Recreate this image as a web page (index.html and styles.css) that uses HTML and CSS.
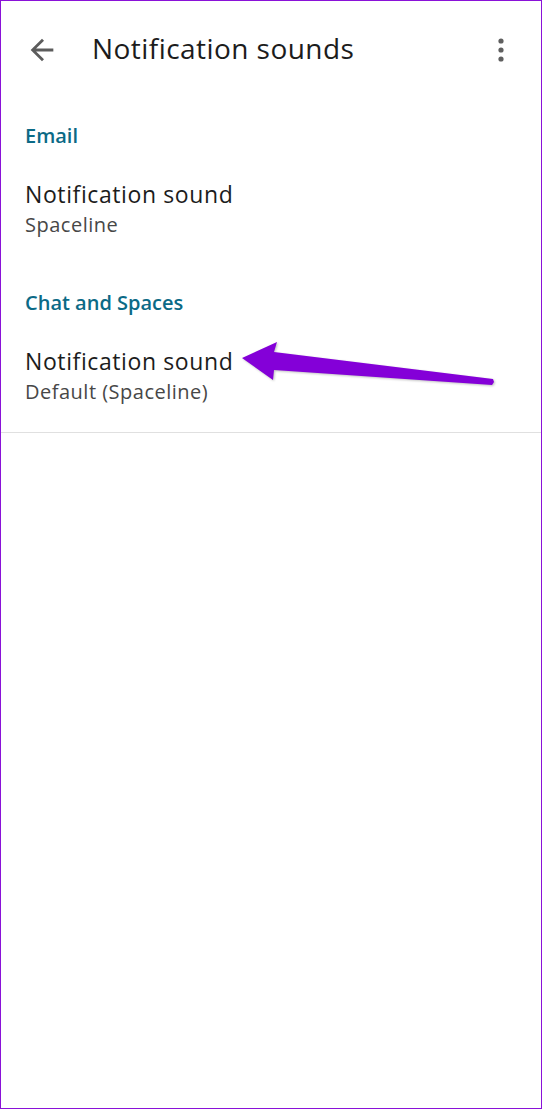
FILE: index.html
```html
<!DOCTYPE html>
<html lang="en">
<head>
  <meta charset="UTF-8">
  <meta name="viewport" content="width=device-width, initial-scale=1.0">
  <title>Notification sounds</title>
  <link rel="stylesheet" href="styles.css">
</head>
<body>
  <div class="screen">
    <!-- Barra superior -->
    <header class="topbar">
      <svg class="back" viewBox="0 0 24 24" width="34" height="34">
        <path d="M20 11H7.83l5.59-5.59L12 4l-8 8 8 8 1.41-1.41L7.83 13H20v-2z"/>
      </svg>
      <h1 class="title">Notification sounds</h1>
      <svg class="more" viewBox="0 0 8 24" width="8" height="24">
        <circle cx="4" cy="3" r="2.6"/>
        <circle cx="4" cy="12" r="2.6"/>
        <circle cx="4" cy="21" r="2.6"/>
      </svg>
    </header>

    <section class="group">
      <h2 class="group-title">Email</h2>
      <div class="item">
        <div class="item-title">Notification sound</div>
        <div class="item-sub">Spaceline</div>
      </div>
    </section>

    <section class="group">
      <h2 class="group-title">Chat and Spaces</h2>
      <div class="item">
        <div class="item-title">Notification sound</div>
        <div class="item-sub">Default (Spaceline)</div>
      </div>
    </section>

    <hr class="divider">

    <!-- Flecha de anotación -->
    <svg class="pointer" viewBox="0 0 542 1109" width="542" height="1109">
      <polygon points="242,358 277,342 274,352 493,379 494,382 492,385 274,370 273,380"/>
    </svg>
  </div>
</body>
</html>
```

FILE: styles.css
```css
* {
  box-sizing: border-box;
}

body {
  margin: 0;
  font-family: "Open Sans", Roboto, sans-serif;
  background-color: #ffffff;
  color: #1f1f1f;
}

.screen {
  position: relative;
  width: 542px;
  height: 1109px;
  border: 1px solid #8a12d8;
  background-color: #ffffff;
  overflow: hidden;
}

.topbar {
  display: flex;
  align-items: center;
  height: 97px;
  padding: 0 0 0 24px;
}

.back {
  fill: #5c5c5c;
  flex: none;
}

.title {
  margin: 0 0 4px 33px;
  font-size: 28px;
  line-height: 34px;
  letter-spacing: 0.45px;
  font-weight: 400;
  color: #1c1c1c;
  flex: 1;
}

.more {
  fill: #5f5f5f;
  margin-right: 36px;
}

.group {
  padding: 0 24px;
}

.group-title {
  margin: 0;
  padding: 24px 0 0;
  font-size: 20px;
  line-height: 28px;
  font-weight: 600;
  color: #0b6a86;
}

.item {
  padding: 29px 0 24px;
}

.item-title {
  font-size: 23px;
  letter-spacing: 0.6px;
  color: #1c1c1c;
  line-height: 30px;
}

.item-sub {
  font-size: 20px;
  letter-spacing: 0.5px;
  color: #474747;
  line-height: 32px;
}

.divider {
  margin: 0;
  border: none;
  border-top: 1px solid #e0e0e0;
}

.pointer {
  position: absolute;
  left: -1px;
  top: -1px;
  fill: #8400d8;
  filter: drop-shadow(1px 1px 1px rgba(0, 0, 0, 0.25));
}
```
